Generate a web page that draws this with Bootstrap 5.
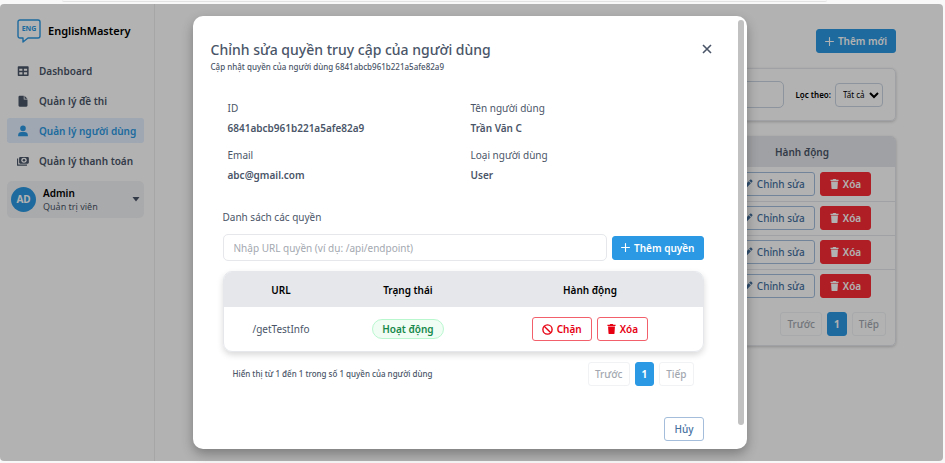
<!DOCTYPE html>
<html lang="vi">
<head>
<meta charset="utf-8">
<meta name="viewport" content="width=device-width, initial-scale=1">
<title>EnglishMastery</title>
<link href="https://cdn.jsdelivr.net/npm/bootstrap@5.3.0/dist/css/bootstrap.min.css" rel="stylesheet">
<style>
:root{--blue:#2b99e3;--ink:#4a5568;--line:#e5e7eb;--red:#e60012}
body{font-family:"Noto Sans","Open Sans",sans-serif;font-size:10px;line-height:14px;color:var(--ink);background:#f8f8f8}
svg{display:block;flex:none}
.browser-edge{height:4px;padding:0 118px 0 62px}
.browser-edge div{height:2px;border-bottom:1px solid #e2e2e2;border-radius:0 0 4px 4px}
.app-frame{margin:0 2px 2px 0;border-radius:4px;background:#fff}
.sidebar{width:155px;padding:15px 10px 0 7px;border-right:1px solid #eee}
.brand{gap:7px;padding-left:10px;margin-bottom:15px;color:#000;font-size:11px;font-weight:600}
.side-nav{gap:5px}
.side-link{display:flex;align-items:center;gap:10px;height:25px;padding:0 0 0 10px;border-radius:3px;color:var(--ink);font-weight:600;text-decoration:none;white-space:nowrap}
.side-link.active{background:#e3efff;color:var(--blue)}
.side-user{margin-top:8px;height:37px;padding:0 4px;gap:7px;border:0;border-radius:5px;background:#f3f4f6;color:#000;text-align:left;line-height:13px}
.avatar{width:25px;height:25px;background:var(--blue);color:#fff;font-weight:700}
.small-text{font-size:8px;font-weight:500}
.side-user .small-text{font-size:9px;font-weight:400;color:var(--ink)}
.page-main{padding:25px 47px 0 48px}
.btn{--bs-btn-font-size:10px;--bs-btn-line-height:14px;--bs-btn-padding-y:4px;--bs-btn-padding-x:9px;--bs-btn-border-radius:3px;--bs-btn-font-weight:600;display:inline-flex;align-items:center;justify-content:center;gap:4px}
.btn-blue,.btn-blue:hover{background:var(--blue);border-color:var(--blue);color:#fff;--bs-btn-padding-x:8px}
.btn-del,.btn-del:hover{background:#fb2c36;border-color:#fb2c36;color:#fff}
.btn-line,.btn-line:hover{border-color:#a3bddb;color:#45719f;--bs-btn-font-weight:500}
.btn-warn,.btn-warn:hover{border-color:#f2606b;color:var(--red)}
.btn-page,.btn-page:disabled{--bs-btn-padding-x:6px;border-color:#f1f2f4;color:#a3a8b0;opacity:1;font-weight:500}
.btn-page.current{background:var(--blue);border-color:var(--blue);color:#fff;font-weight:700}
.soft-card{border:1px solid var(--line);border-radius:5px;box-shadow:0 1px 3px rgba(0,0,0,.2)}
.filter{margin-top:15px;padding:12px;gap:11px}
.form-control{height:27px;padding:0 10px;font-size:10px;border-color:var(--line);border-radius:5px;color:var(--ink)}
.form-control::placeholder{color:#a3a8b0}
.filter .form-control{border-color:#cbd5e1}
.filter label{font-size:8px;font-weight:600;color:#000;white-space:nowrap}
.pick{height:24px;width:48px;border:1px solid #cbd5e1;border-radius:4px;background:#fff;font-size:8px;padding:0 0 0 3px}
.users{margin-top:15px;overflow:hidden}
.grid-table{width:100%;margin:0;table-layout:fixed;text-align:center}
.grid-table th{background:var(--line);font-weight:600}
.users th{height:30px}
.users td{height:34px;border-bottom:1px solid var(--line)}
.users tr:last-child td{border-bottom:0}
.users .last-col{width:186px}
.users .table-foot{padding:9px 9px 9px}
.pager{gap:5px}
.shade{inset:0;padding-right:4px;background:rgba(0,0,0,.3);border-radius:4px}
.dialog{width:554px;max-width:94%;border-radius:10px;background:#fff;box-shadow:0 5px 12px rgba(0,0,0,.3)}
.dialog-body{padding:23px 0 8px 18px;min-width:0}
.thumb{width:6px;margin:4px 3px 24px 0;border-radius:3px;background:#c1c1c1}
.dialog-head{padding-right:21px}
.dialog-title{font-size:14px;line-height:21px;font-weight:500;margin:0;color:var(--ink)}
.close-x{border:0;background:none;padding:5px;color:var(--ink)}
.facts{margin:27px 24px 0 17px;row-gap:13px}
.facts dt{font-weight:400;margin-bottom:6px}
.facts dd{font-weight:600;margin:0}
.perm{margin:28px 34px 0 12px}
.perm .caption-text{font-weight:400;margin-bottom:10px}
.perm .add-row{gap:5px}
.perm-table{margin-top:10px;border:1px solid var(--line);border-radius:9px;overflow:hidden;box-shadow:0 3px 6px rgba(0,0,0,.15)}
.perm-table th{height:35px;color:#000}
.perm-table td{height:44px}
.state{display:inline-block;padding:2px 9px;border:1px solid #b9f8cf;border-radius:10px;background:#f0fdf4;color:#15884a;font-weight:600}
.perm .foot{padding:10px 10px 0}
.dialog-foot{margin:31px 34px 0 0}
</style>
<script src="https://cdn.jsdelivr.net/npm/bootstrap@5.3.0/dist/js/bootstrap.bundle.min.js"></script>
</head>
<body class="d-flex flex-column min-vh-100">
<svg width="0" height="0" class="position-absolute" aria-hidden="true">
<symbol id="i-trash" viewBox="0 0 14 16"><path fill="currentColor" d="M5 0h4l1 1.2h3.500v2H.5v-2H4zM1.500 4h11l-.7 10.600c0 .8-.6 1.400-1.400 1.400H3.600c-.8 0-1.400-.6-1.400-1.400z"/></symbol>
<symbol id="i-plus" viewBox="0 0 16 16"><path stroke="currentColor" stroke-width="2" stroke-linecap="round" d="M8 1v14M1 8h14"/></symbol>
<symbol id="i-pen" viewBox="0 0 16 16"><path fill="currentColor" d="M11.2 1.3a1.7 1.7 0 0 1 2.4 0l1.1 1.1a1.7 1.7 0 0 1 0 2.4l-1.3 1.3-3.5-3.5zM9.1 3.4l3.5 3.5-7.3 7.3L1 15l.8-4.3z"/></symbol>
</svg>
<div class="browser-edge"><div></div></div>
<div class="app-frame position-relative d-flex flex-fill">
<aside class="sidebar flex-shrink-0">
<div class="brand d-flex align-items-center">
<svg width="24" height="24" viewBox="0 0 24 24"><path d="M3 1h18a2 2 0 0 1 2 2v14a2 2 0 0 1-2 2H11l-5 4v-4H3a2 2 0 0 1-2-2V3a2 2 0 0 1 2-2z" fill="none" stroke="#2b99e3" stroke-width="1.4" stroke-linejoin="round"/><text x="12" y="12" font-size="7" font-weight="700" text-anchor="middle" fill="#2b99e3">ENG</text></svg>
<span>EnglishMastery</span></div>
<nav class="side-nav d-flex flex-column">
<a class="side-link" href="#"><svg width="12" height="12" viewBox="0 0 16 16"><path d="M2 2.500h12.500v11H2zM2 4h12.500M2 8.700h12.500M8.200 4v9.500" fill="none" stroke="currentColor" stroke-width="2" stroke-linejoin="round"/></svg>Dashboard</a>
<a class="side-link" href="#"><svg width="12" height="12" viewBox="0 0 16 16"><path fill="currentColor" d="M3.500 1H9v5h5v8a1.500 1.500 0 0 1-1.500 1.500h-9A1.500 1.500 0 0 1 2 14V2.500A1.500 1.500 0 0 1 3.500 1zM10 1l4 4h-4z"/></svg>Quản lý đề thi</a>
<a class="side-link active" href="#"><svg width="12" height="12" viewBox="0 0 16 16"><circle cx="8" cy="4.500" r="3.700" fill="currentColor"/><path fill="currentColor" d="M1.500 15v-1.500A4.500 4.500 0 0 1 6 9.300h4a4.500 4.500 0 0 1 4.500 4.200V15z"/></svg>Quản lý người dùng</a>
<a class="side-link" href="#"><svg width="12" height="12" viewBox="0 0 16 16"><rect x="2.800" y="2.500" width="13" height="9" rx="1.500" fill="currentColor"/><ellipse cx="9.300" cy="7" rx="3.600" ry="3.200" fill="#fff"/><circle cx="9.300" cy="7" r="1.700" fill="currentColor"/><path d="M.8 4.500v9h12.500" fill="none" stroke="currentColor" stroke-width="1.500" stroke-linejoin="round"/></svg>Quản lý thanh toán</a>
</nav>
<button type="button" class="side-user d-flex align-items-center w-100"><span class="avatar rounded-circle d-flex align-items-center justify-content-center">AD</span><span class="flex-fill"><span class="d-block fw-semibold">Admin</span><span class="d-block small-text">Quản trị viên</span></span><svg width="8" height="5" viewBox="0 0 8 5"><path d="M.5 0h7L4 4.500z" fill="#4a5568"/></svg></button>
</aside>
<main class="page-main flex-fill">
<div class="d-flex justify-content-end"><button type="button" class="btn btn-blue"><svg width="9" height="9"><use href="#i-plus"/></svg>Thêm mới</button></div>
<div class="soft-card filter d-flex align-items-center">
<input class="form-control" type="search" aria-label="Tìm kiếm">
<div class="d-flex align-items-center gap-1"><label for="kind">Lọc theo:</label><select id="kind" class="pick"><option>Tất cả</option></select></div>
</div>
<div class="soft-card users">
<table class="grid-table">
<thead><tr><th></th><th class="last-col">Hành động</th></tr></thead>
<tbody>
<tr><td></td><td><div class="d-flex justify-content-center pager"><button type="button" class="btn btn-line"><svg width="10" height="10"><use href="#i-pen"/></svg>Chỉnh sửa</button><button type="button" class="btn btn-del"><svg width="9" height="10"><use href="#i-trash"/></svg>Xóa</button></div></td></tr>
<tr><td></td><td><div class="d-flex justify-content-center pager"><button type="button" class="btn btn-line"><svg width="10" height="10"><use href="#i-pen"/></svg>Chỉnh sửa</button><button type="button" class="btn btn-del"><svg width="9" height="10"><use href="#i-trash"/></svg>Xóa</button></div></td></tr>
<tr><td></td><td><div class="d-flex justify-content-center pager"><button type="button" class="btn btn-line"><svg width="10" height="10"><use href="#i-pen"/></svg>Chỉnh sửa</button><button type="button" class="btn btn-del"><svg width="9" height="10"><use href="#i-trash"/></svg>Xóa</button></div></td></tr>
<tr><td></td><td><div class="d-flex justify-content-center pager"><button type="button" class="btn btn-line"><svg width="10" height="10"><use href="#i-pen"/></svg>Chỉnh sửa</button><button type="button" class="btn btn-del"><svg width="9" height="10"><use href="#i-trash"/></svg>Xóa</button></div></td></tr>
</tbody>
</table>
<div class="table-foot d-flex justify-content-end pager"><button type="button" class="btn btn-page" disabled>Trước</button><button type="button" class="btn btn-page current">1</button><button type="button" class="btn btn-page" disabled>Tiếp</button></div>
</div>
</main>
<div class="shade position-absolute d-flex align-items-center justify-content-center">
<section class="dialog d-flex" role="dialog" aria-labelledby="dlg-title">
<div class="dialog-body flex-fill">
<div class="dialog-head d-flex justify-content-between align-items-start">
<div><h1 class="dialog-title" id="dlg-title">Chỉnh sửa quyền truy cập của người dùng</h1><div class="small-text">Cập nhật quyền của người dùng 6841abcb961b221a5afe82a9</div></div>
<button type="button" class="close-x" aria-label="Đóng"><svg width="10" height="10" viewBox="0 0 10 10"><path d="M1 1l8 8M9 1L1 9" stroke="currentColor" stroke-width="1.600"/></svg></button>
</div>
<dl class="facts row gx-0">
<div class="col-6"><dt>ID</dt><dd>6841abcb961b221a5afe82a9</dd></div>
<div class="col-6"><dt>Tên người dùng</dt><dd>Trần Văn C</dd></div>
<div class="col-6"><dt>Email</dt><dd>abc@gmail.com</dd></div>
<div class="col-6"><dt>Loại người dùng</dt><dd>User</dd></div>
</dl>
<div class="perm">
<label class="caption-text d-block" for="url">Danh sách các quyền</label>
<div class="add-row d-flex align-items-center"><input id="url" class="form-control" type="text" placeholder="Nhập URL quyền (ví dụ: /api/endpoint)"><button type="button" class="btn btn-blue flex-shrink-0"><svg width="9" height="9"><use href="#i-plus"/></svg>Thêm quyền</button></div>
<div class="perm-table">
<table class="grid-table">
<colgroup><col style="width:24%"><col style="width:29%"><col style="width:47%"></colgroup>
<thead><tr><th>URL</th><th>Trạng thái</th><th>Hành động</th></tr></thead>
<tbody><tr><td>/getTestInfo</td><td><span class="state">Hoạt động</span></td><td><div class="d-flex justify-content-center pager"><button type="button" class="btn btn-warn"><svg width="11" height="11" viewBox="0 0 16 16"><path d="M3.200 3.200l9.600 9.600" stroke="currentColor" stroke-width="2"/><circle cx="8" cy="8" r="6.700" fill="none" stroke="currentColor" stroke-width="2"/></svg>Chặn</button><button type="button" class="btn btn-warn"><svg width="9" height="10"><use href="#i-trash"/></svg>Xóa</button></div></td></tr></tbody>
</table>
</div>
<div class="foot d-flex justify-content-between align-items-center"><span class="small-text">Hiển thị từ 1 đến 1 trong số 1 quyền của người dùng</span><div class="pager d-flex"><button type="button" class="btn btn-page" disabled>Trước</button><button type="button" class="btn btn-page current">1</button><button type="button" class="btn btn-page" disabled>Tiếp</button></div></div>
</div>
<div class="dialog-foot d-flex justify-content-end"><button type="button" class="btn btn-line">Hủy</button></div>
</div>
<div class="thumb flex-shrink-0"></div>
</section>
</div>
</div>
</body>
</html>
